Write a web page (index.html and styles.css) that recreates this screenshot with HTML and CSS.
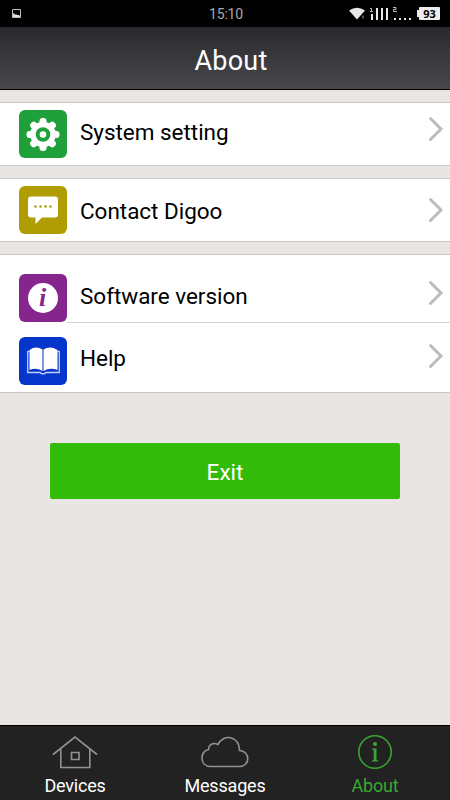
FILE: index.html
```html
<!DOCTYPE html>
<html lang="en">
<head>
<meta charset="utf-8">
<title>About</title>
<link rel="stylesheet" href="styles.css">
</head>
<body>
<div class="status">
  <svg class="status-picture" width="9" height="9" viewBox="0 0 9 9"><path fill="none" stroke="#bbb" d="M.5.5h8v8h-8z"/><path fill="#ddd" d="M1 8V5l1-1 1 2 1-1 1 1h2l1 1v1z"/></svg>
  <time>15:10</time>
  <div class="status-right">
    <svg width="68" height="14" viewBox="0 0 68 14">
      <path fill="#e8e8e8" d="M0 3.500Q8-2 16 3.500L8 12.500z"/><path fill="#555" d="M13 8.500h2v3h-2z"/>
      <path fill="#e8e8e8" d="M22 7h2v6h-2zM27 1h2v12h-2zM32 1h2v12h-2zM37 1h2v12h-2zM45 11h2v2h-2zM50 11h2v2h-2zM55 11h2v2h-2zM60 11h2v2h-2z"/>
      <path fill="none" stroke="#bbb" d="M21 1.500h1.500V4.500M21 4.500h3M44 .5h3v2h-2.500v2H48"/>
    </svg>
    <span class="nub"></span><span class="battery">93</span>
  </div>
</div>
<header class="header"><h1>About</h1></header>
<main class="content">
  <section class="card">
    <a class="row row-system">
      <svg class="icon green" viewBox="0 0 48 48"><g fill="#fff" transform="translate(24 24.500)"><circle r="12.800"/><g id="teeth"><rect x="-3.500" y="-16.500" width="7" height="33" rx="3"/><rect x="-16.500" y="-3.500" width="33" height="7" rx="3"/></g><use href="#teeth" transform="rotate(45)"/><circle r="5.300" fill="none" stroke="#1fa03a" stroke-width="4"/></g></svg>
      <span class="label">System setting</span>
      <svg class="chevron" viewBox="0 0 16 26"><path d="m2.500 2.500 10.500 10.500L2.500 23.500"/></svg>
    </a>
  </section>
  <section class="card">
    <a class="row row-contact">
      <svg class="icon olive" viewBox="0 0 48 48"><path fill="#fff" d="M12 10.500h24q3 0 3 3v15q0 3-3 3H23l-6.500 6.500v-6.500H12q-3 0-3-3v-15q0-3 3-3"/><g fill="#b09d03"><circle cx="16.500" cy="20.500" r="1.300"/><circle cx="21.500" cy="20.500" r="1.300"/><circle cx="26.500" cy="20.500" r="1.300"/><circle cx="31.500" cy="20.500" r="1.300"/></g></svg>
      <span class="label">Contact Digoo</span>
      <svg class="chevron" viewBox="0 0 16 26"><path d="m2.500 2.500 10.500 10.500L2.500 23.500"/></svg>
    </a>
  </section>
  <section class="card">
    <a class="row row-version">
      <svg class="icon purple" viewBox="0 0 48 48"><circle cx="24" cy="24" r="15" fill="#fff"/><text class="italic-i" x="23.500" y="32" text-anchor="middle">i</text></svg>
      <span class="label">Software version</span>
      <svg class="chevron" viewBox="0 0 16 26"><path d="m2.500 2.500 10.500 10.500L2.500 23.500"/></svg>
    </a>
    <a class="row row-help">
      <svg class="icon blue" viewBox="0 0 48 48"><path fill="none" stroke="#c2d0fa" stroke-width="1.300" d="M10.500 14.500H8.700V35.500H21q1 1.300 3 1.300t3-1.300H40.300V14.500h-1.800"/><path fill="#fff" d="M10.500 13Q17 8.500 23.500 12.500V34Q17 30 10.500 33zM38.500 13Q31 8.500 24.500 12.500V34Q31 30 38.500 33z"/></svg>
      <span class="label">Help</span>
      <svg class="chevron" viewBox="0 0 16 26"><path d="m2.500 2.500 10.500 10.500L2.500 23.500"/></svg>
    </a>
  </section>
  <button class="exit">Exit</button>
</main>
<nav class="tabs">
  <a class="tab"><svg width="48" height="36" viewBox="0 0 48 36"><g fill="none" stroke="#929292" stroke-width="1.600"><path d="M2 20.500 24 3l22 17.500M9.800 14.500V33.500H38.800V14.500"/><path d="M20.500 18.500h7.500v7h-7.500z"/></g></svg><span>Devices</span></a>
  <a class="tab"><svg width="48" height="36" viewBox="0 0 48 36"><path fill="none" stroke="#929292" stroke-width="1.600" d="M9.500 32.500C-1.500 32.500-1.500 17 7.500 15.500 8 9.500 13 8.500 17 10.500 22-.5 38.500 1.500 38.500 16.500 49.500 17 49.500 32.500 38.500 32.500z"/></svg><span>Messages</span></a>
  <a class="tab active"><svg width="48" height="36" viewBox="0 0 48 36"><circle cx="24" cy="18" r="16.200" fill="none" stroke="#38a832" stroke-width="1.600"/><circle cx="24" cy="10" r="2.100" fill="#38a832"/><path fill="#38a832" d="M21.300 14.500h4.200v11.700h1.500v1.300h-6v-1.300h1.700V15.800h-1.400z"/></svg><span>About</span></a>
</nav>
</body>
</html>
```
FILE: styles.css
```css
* { box-sizing: border-box; }
body {
  margin: 0;
  width: 450px;
  height: 800px;
  display: flex;
  flex-direction: column;
  overflow: hidden;
  background: #e9e5e2;
  color: #000;
  font-family: Roboto, "Liberation Sans", sans-serif;
}
svg { display: block; flex: none; }
.status {
  height: 27px;
  flex: none;
  padding: 0 10px 0 12px;
  display: grid;
  grid-template-columns: 1fr auto 1fr;
  align-items: center;
  background: #000;
  color: #aaa;
}
.status time { font-size: 14px; letter-spacing: -.2px; }
.status-right { display: flex; justify-content: flex-end; align-items: center; }
.nub { width: 2px; height: 7px; background: #ececec; }
.battery {
  width: 21px;
  height: 13px;
  border-radius: 1px;
  background: #ececec;
  color: #000;
  font: bold 11px/13px "Open Sans", sans-serif;
  text-align: center;
}
.header {
  height: 63px;
  flex: none;
  border-bottom: 1px solid #000;
  background: linear-gradient(#2a2a2e, #48484c);
}
.header h1 {
  margin: 0;
  padding-left: 12px;
  color: #fff;
  text-align: center;
  font-size: 27px;
  line-height: 68px;
  font-weight: 400;
  letter-spacing: .2px;
}
.content { flex: 1; padding-top: 12px; }
.card {
  margin-bottom: 12px;
  border: solid #c8c8c8;
  border-width: 1px 0;
  background: #fff;
}
.row { display: flex; align-items: flex-start; padding: 0 6px 0 19px; }
.icon { width: 48px; height: 48px; border-radius: 6px; margin-right: 13px; }
.green { background: #1fa03a; }
.olive { background: #b09d03; }
.purple { background: #87258f; }
.blue { background: #0635cc; }
.label { flex: 1; font-size: 22.5px; line-height: 26px; letter-spacing: -.03px; }
.chevron { width: 16px; height: 26px; fill: none; stroke: #bcbcbc; stroke-width: 3; stroke-linecap: round; }
.italic-i { font: italic bold 26px "Liberation Serif", serif; fill: #87258f; }
.row-system { height: 62px; padding-top: 7px; }
.row-system .label { margin-top: 9px; }
.row-system .chevron { margin-top: 6px; }
.row-contact { height: 62px; padding-top: 7px; }
.row-contact .label { margin-top: 12px; }
.row-contact .chevron { margin-top: 11px; }
.row-version {
  height: 68px;
  padding-top: 19px;
  background: linear-gradient(#d0d0d0, #d0d0d0) 67px 100% / 383px 1px no-repeat;
}
.row-version .label { margin-top: 9px; }
.row-version .chevron { margin-top: 6px; }
.row-help { height: 69px; padding-top: 14px; }
.row-help .label { margin-top: 8px; }
.row-help .chevron { margin-top: 6px; }
.exit {
  display: block;
  width: 350px;
  height: 56px;
  margin: 50px auto 0;
  padding: 2px 0 0;
  border: 0;
  border-radius: 2px;
  background: #33bb09;
  color: #fff;
  font: 22.5px/26px Roboto, sans-serif;
}
.tabs {
  height: 75px;
  flex: none;
  display: grid;
  grid-template-columns: repeat(3, 1fr);
  border-top: 1px solid #000;
  background: #222;
  color: #fff;
}
.tab { display: flex; flex-direction: column; align-items: center; padding-top: 8px; }
.tab span { margin-top: 5px; font-size: 18px; line-height: 22px; letter-spacing: -.2px; }
.tab.active { color: #38a832; }
```
